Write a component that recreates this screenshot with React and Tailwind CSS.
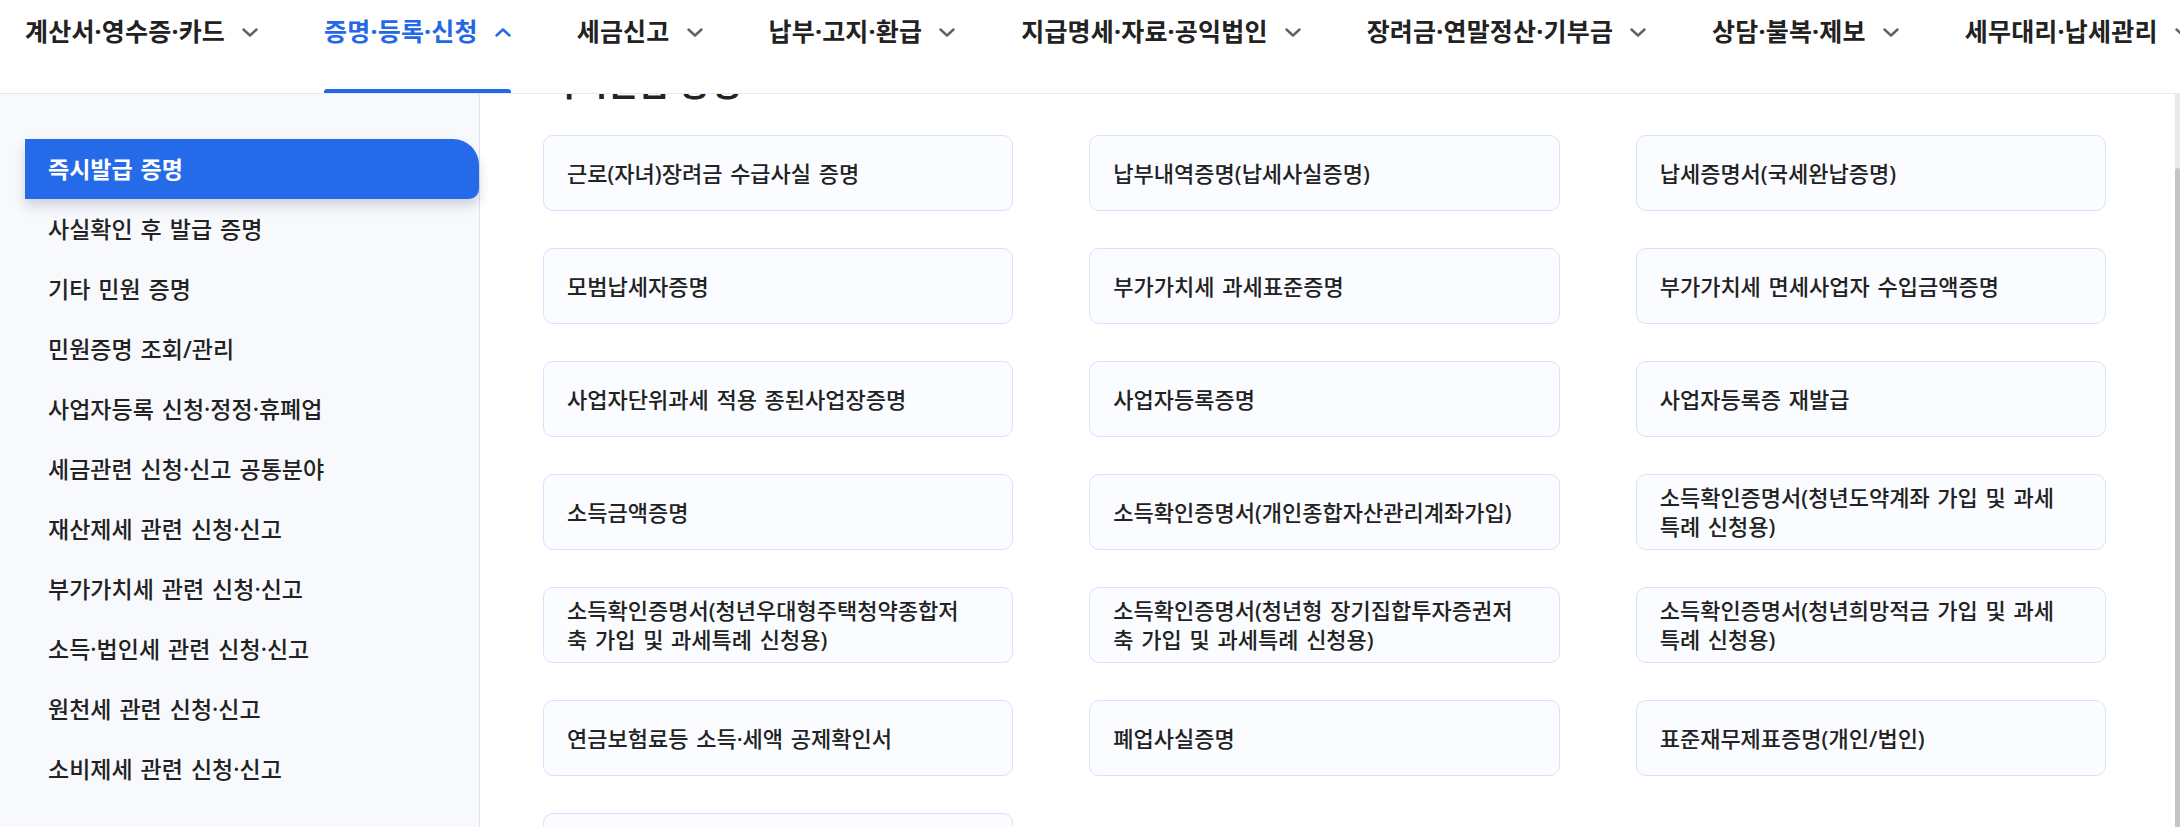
import React from 'react';

const navItems = [
  { label: '계산서·영수증·카드' },
  { label: '증명·등록·신청', active: true },
  { label: '세금신고' },
  { label: '납부·고지·환급' },
  { label: '지급명세·자료·공익법인' },
  { label: '장려금·연말정산·기부금' },
  { label: '상담·불복·제보' },
  { label: '세무대리·납세관리' },
];

const sideItems = [
  '즉시발급 증명',
  '사실확인 후 발급 증명',
  '기타 민원 증명',
  '민원증명 조회/관리',
  '사업자등록 신청·정정·휴폐업',
  '세금관련 신청·신고 공통분야',
  '재산제세 관련 신청·신고',
  '부가가치세 관련 신청·신고',
  '소득·법인세 관련 신청·신고',
  '원천세 관련 신청·신고',
  '소비제세 관련 신청·신고',
];

// 줄바꿈은 원본 화면 그대로 맞춤
const certs = [
  ['근로(자녀)장려금 수급사실 증명'],
  ['납부내역증명(납세사실증명)'],
  ['납세증명서(국세완납증명)'],
  ['모범납세자증명'],
  ['부가가치세 과세표준증명'],
  ['부가가치세 면세사업자 수입금액증명'],
  ['사업자단위과세 적용 종된사업장증명'],
  ['사업자등록증명'],
  ['사업자등록증 재발급'],
  ['소득금액증명'],
  ['소득확인증명서(개인종합자산관리계좌가입)'],
  ['소득확인증명서(청년도약계좌 가입 및 과세', '특례 신청용)'],
  ['소득확인증명서(청년우대형주택청약종합저', '축 가입 및 과세특례 신청용)'],
  ['소득확인증명서(청년형 장기집합투자증권저', '축 가입 및 과세특례 신청용)'],
  ['소득확인증명서(청년희망적금 가입 및 과세', '특례 신청용)'],
  ['연금보험료등 소득·세액 공제확인서'],
  ['폐업사실증명'],
  ['표준재무제표증명(개인/법인)'],
  ['휴업사실증명'],
];

function Chevron({ up, className }) {
  return (
    <svg width="16" height="9" viewBox="0 0 16 9" fill="none" className={className}>
      <path
        d={up ? 'M1.5 7.5L8 1.5L14.5 7.5' : 'M1.5 1.5L8 7.5L14.5 1.5'}
        stroke="currentColor"
        strokeWidth="2.4"
        strokeLinecap="round"
        strokeLinejoin="round"
      />
    </svg>
  );
}

export default function App() {
  return (
    <div className="w-[2180px] h-[827px] overflow-hidden flex flex-col bg-white text-[#222] font-['Noto_Sans','Noto_Sans_CJK_KR',sans-serif]">
      {/* 상단 메뉴 */}
      <header className="h-[94px] shrink-0 border-b border-[#e7e9ee] flex gap-[66px] pl-[25px] overflow-hidden whitespace-nowrap">
        {navItems.map((item) => (
          <div key={item.label} className="h-full flex flex-col shrink-0">
            <div className="flex items-center pt-[16px] h-[47px]">
              <span
                className={`text-[25px] leading-[31px] font-bold tracking-[0.2px] ${
                  item.active ? 'text-[#2468e8]' : 'text-[#222]'
                }`}
              >
                {item.label}
              </span>
              <Chevron
                up={item.active}
                className={`ml-[17px] mt-[2px] ${item.active ? 'text-[#2468e8]' : 'text-[#5d616d]'}`}
              />
            </div>
            <div className="flex-1" />
            <div className={`h-[4px] rounded-t-[3px] ${item.active ? 'bg-[#2468e8]' : ''}`} />
          </div>
        ))}
      </header>

      <div className="flex flex-1 min-h-0">
        {/* 왼쪽 메뉴 */}
        <aside className="w-[480px] shrink-0 bg-[#f8f9fd] border-r border-[#dbe4f5] pt-[45px] pl-[25px]">
          <ul>
            {sideItems.map((label, i) => (
              <li
                key={label}
                className={`h-[60px] flex items-center pl-[23px] text-[23px] [word-spacing:2px] ${
                  i === 0
                    ? 'bg-[#256ae9] text-white font-bold rounded-tr-[26px] rounded-br-[10px] shadow-[0_7px_12px_rgba(30,40,70,0.18)]'
                    : 'font-medium text-[#222]'
                }`}
              >
                {label}
              </li>
            ))}
          </ul>
        </aside>

        {/* 본문 */}
        <main className="flex-1 overflow-hidden pl-[63px]">
          <h2 className="-mt-[28px] pl-[2px] text-[34px] leading-[34px] font-bold text-[#222]">즉시발급 증명</h2>
          <div className="mt-[35px] w-[1563px] grid grid-cols-3 gap-x-[76px] gap-y-[37px]">
            {certs.map((lines) => (
              <div
                key={lines.join('')}
                className="h-[76px] flex flex-col justify-center px-[23px] rounded-[10px] border border-[#d6e3fa] bg-[#fafcff] text-[22px] leading-[29px] font-medium text-[#222] [word-spacing:2px]"
              >
                {lines.map((line) => (
                  <span key={line} className="whitespace-nowrap">
                    {line}
                  </span>
                ))}
              </div>
            ))}
          </div>
        </main>

        {/* 스크롤바 */}
        <div className="w-[5px] shrink-0 bg-[#eaebf0] flex flex-col pt-[74px]">
          <div className="flex-1 bg-[#c3c5ca] rounded-t-full" />
        </div>
      </div>
    </div>
  );
}
